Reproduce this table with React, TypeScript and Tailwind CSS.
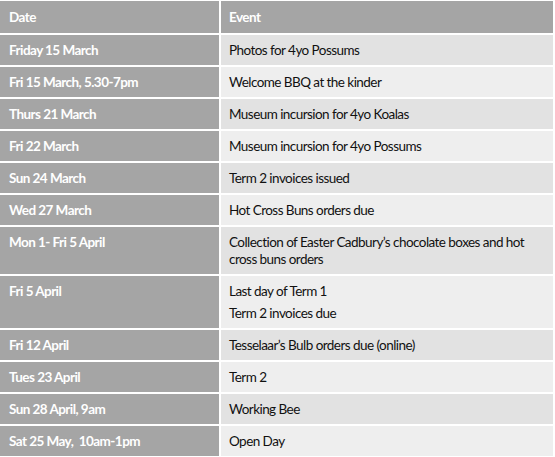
const rows: { date: string; events: string[] }[] = [
  { date: "Friday 15 March", events: ["Photos for 4yo Possums"] },
  { date: "Fri 15 March, 5.30-7pm", events: ["Welcome BBQ at the kinder"] },
  { date: "Thurs 21 March", events: ["Museum incursion for 4yo Koalas"] },
  { date: "Fri 22 March", events: ["Museum incursion for 4yo Possums"] },
  { date: "Sun 24 March", events: ["Term 2 invoices issued"] },
  { date: "Wed 27 March", events: ["Hot Cross Buns orders due"] },
  {
    date: "Mon 1- Fri 5 April",
    events: ["Collection of Easter Cadbury\u2019s chocolate boxes and hot cross buns orders"],
  },
  { date: "Fri 5 April", events: ["Last day of Term 1", "Term 2 invoices due"] },
  { date: "Fri 12 April", events: ["Tesselaar\u2019s Bulb orders due (online)"] },
  { date: "Tues 23 April", events: ["Term 2"] },
  { date: "Sun 28 April, 9am", events: ["Working Bee"] },
  { date: "Sat 25 May,  10am-1pm", events: ["Open Day"] },
];

export default function App() {
  return (
    <div
      className="w-[555px] h-[457px] overflow-hidden bg-white pt-px pr-[2px] text-[13.5px] leading-[17px] tracking-[-0.55px]"
      style={{ fontFamily: "Lato, 'Open Sans', sans-serif" }}
    >
      <div className="flex flex-col gap-[2px]">
        {/* Header */}
        <div className="grid grid-cols-[219px_1fr] gap-[2px] h-[32px]">
          <div className="bg-[#a5a5a5] text-white font-bold pl-[9px] flex items-center">Date</div>
          <div className="bg-[#a5a5a5] text-white font-bold pl-[8px] flex items-center">Event</div>
        </div>

        {rows.map((r, i) => (
          <div key={i} className="grid grid-cols-[219px_1fr] gap-[2px]">
            <div className="bg-[#a5a5a5] text-white font-bold pl-[9px] pt-[7px] pb-[6px] whitespace-pre">
              {r.date}
            </div>
            <div
              className={`${i % 2 === 0 ? "bg-[#e2e2e2]" : "bg-[#eeeeee]"} text-[#111] pl-[8px] pr-[10px] pt-[7px] pb-[6px] flex flex-col gap-[5px]`}
            >
              {r.events.map((e, j) => (
                <p key={j}>{e}</p>
              ))}
            </div>
          </div>
        ))}
      </div>
    </div>
  );
}
